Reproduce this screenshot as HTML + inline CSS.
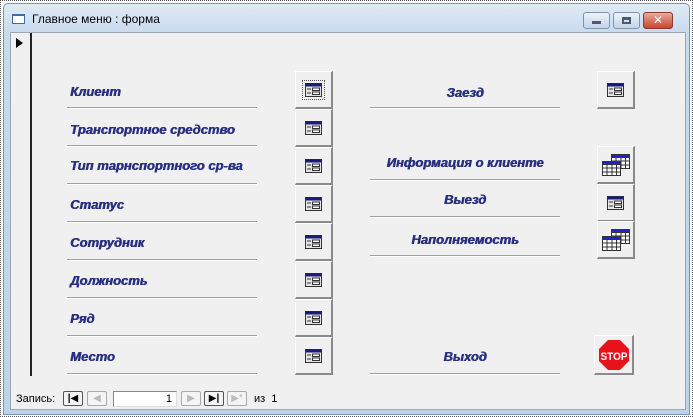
<!DOCTYPE html>
<html><head><meta charset="utf-8"><style>
*{margin:0;padding:0;box-sizing:border-box}
body{width:693px;height:417px;background:#fff;position:relative;overflow:hidden;font-family:"Liberation Sans","DejaVu Sans",sans-serif}
.a{position:absolute}
.win{left:3px;top:3px;width:687px;height:412px;background:linear-gradient(#dfeaf6,#c9daee 30px,#bcd3ec);border:1px solid #7c93b3;border-radius:5px 5px 0 0}
.content{left:10px;top:32px;width:676px;height:378px;background:#f0f0f0;border:1px solid #9aa6b4}
.lbl{position:absolute;color:#28307f;font-weight:bold;font-style:italic;font-size:13px;white-space:nowrap;text-shadow:0.6px 0 0 #28307f}
.ln{position:absolute;height:2px;border-top:1px solid #a0a0a0;border-bottom:1px solid #fff}
.btn{position:absolute;width:38px;height:38px;background:#f0f0f0;border-top:1px solid #fff;border-left:1px solid #fff;border-right:2px solid #8a8a8a;border-bottom:2px solid #8a8a8a;display:flex;align-items:center;justify-content:center}
.nb{position:absolute;top:391px;height:15px;width:20px;border:1px solid #a9a9a9;background:#f4f4f4;border-radius:2px;font-size:10px;text-align:center;line-height:13px;color:#bbb}
</style></head><body>
<svg width="0" height="0" style="position:absolute"><defs>
<symbol id="fi" viewBox="0 0 17 14"><rect x="0.5" y="0.5" width="16" height="13" fill="#e4e4e4" stroke="#333"/><rect x="0.5" y="0.5" width="16" height="3" fill="#1a1a7a"/><path d="M2 6h4M2 10h4" stroke="#333"/><rect x="7.5" y="5" width="7" height="2.5" fill="#fff" stroke="#333" stroke-width="1"/><rect x="7.5" y="9" width="7" height="2.5" fill="#fff" stroke="#333" stroke-width="1"/></symbol>
<symbol id="tb" viewBox="0 0 30 24"><g stroke="#333" stroke-width="1"><rect x="10.5" y="1.5" width="18" height="14" fill="#fff"/><rect x="10.5" y="1.5" width="18" height="3" fill="#2222cc"/><path d="M10.5 8h18M10.5 12h18M15 4v11M20 4v11M24.5 4v11"/><rect x="1.5" y="8.5" width="18" height="14" fill="#fff"/><rect x="1.5" y="8.5" width="18" height="3" fill="#2222cc"/><path d="M1.5 15h18M1.5 19h18M6 11v11M11 11v11M15.5 11v11"/></g></symbol>
</defs></svg>
<div style="position:absolute;left:0;top:0;width:693px;height:417px;border:1px dotted #555"></div>
<div class="a win"></div>
<div class="a" style="left:12px;top:14px;width:13px;height:10px;border:1px solid #3a6ea5;background:#fff;border-top:2px solid #3a6ea5"></div>
<div class="a" style="left:32px;top:12px;font-size:12px;color:#000">Главное меню : форма</div>
<div class="a" style="left:583px;top:12px;width:27px;height:17px;border:1px solid #7f93ad;border-radius:3px;background:linear-gradient(#eef3fa,#c2d3e8)"><div class="a" style="left:8px;top:8px;width:9px;height:3px;background:#4a5a70"></div></div>
<div class="a" style="left:613px;top:12px;width:27px;height:17px;border:1px solid #7f93ad;border-radius:3px;background:linear-gradient(#eef3fa,#c2d3e8)"><div class="a" style="left:8px;top:4px;width:9px;height:7px;border:2px solid #4a5a70;border-top-width:3px"></div></div>
<div class="a" style="left:643px;top:12px;width:30px;height:17px;border:1px solid #8d3a30;border-radius:3px;background:linear-gradient(#e9a99a,#c8452f);color:#fff;font-weight:bold;font-size:12px;text-align:center;line-height:15px">✕</div>
<div class="a content"></div>
<div class="a" style="left:30px;top:33px;width:2px;height:343px;background:#222"></div>
<div class="a" style="left:16px;top:38px;width:0;height:0;border-left:7px solid #000;border-top:5px solid transparent;border-bottom:5px solid transparent"></div>

<div class="lbl" style="left:70px;top:84px">Клиент</div>
<div class="lbl" style="left:70px;top:122px">Транспортное средство</div>
<div class="lbl" style="left:70px;top:158px">Тип тарнспортного ср-ва</div>
<div class="lbl" style="left:70px;top:197px">Статус</div>
<div class="lbl" style="left:70px;top:235px">Сотрудник</div>
<div class="lbl" style="left:70px;top:273px">Должность</div>
<div class="lbl" style="left:70px;top:311px">Ряд</div>
<div class="lbl" style="left:70px;top:349px">Место</div>
<div class="ln" style="left:67px;top:107px;width:190px"></div>
<div class="ln" style="left:67px;top:145px;width:190px"></div>
<div class="ln" style="left:67px;top:183px;width:190px"></div>
<div class="ln" style="left:67px;top:221px;width:190px"></div>
<div class="ln" style="left:67px;top:259px;width:190px"></div>
<div class="ln" style="left:67px;top:297px;width:190px"></div>
<div class="ln" style="left:67px;top:335px;width:190px"></div>
<div class="ln" style="left:67px;top:373px;width:190px"></div>

<div class="btn" style="left:295px;top:71px"><div style="border:1px dotted #555;padding:2px;line-height:0"><svg width="17" height="14"><use href="#fi"/></svg></div></div>
<div class="btn" style="left:295px;top:109px"><svg width="17" height="14"><use href="#fi"/></svg></div>
<div class="btn" style="left:295px;top:147px"><svg width="17" height="14"><use href="#fi"/></svg></div>
<div class="btn" style="left:295px;top:185px"><svg width="17" height="14"><use href="#fi"/></svg></div>
<div class="btn" style="left:295px;top:223px"><svg width="17" height="14"><use href="#fi"/></svg></div>
<div class="btn" style="left:295px;top:261px"><svg width="17" height="14"><use href="#fi"/></svg></div>
<div class="btn" style="left:295px;top:299px"><svg width="17" height="14"><use href="#fi"/></svg></div>
<div class="btn" style="left:295px;top:337px"><svg width="17" height="14"><use href="#fi"/></svg></div>

<div class="lbl" style="left:370px;width:190px;text-align:center;top:85px">Заезд</div>
<div class="lbl" style="left:370px;width:190px;text-align:center;top:155px">Информация о клиенте</div>
<div class="lbl" style="left:370px;width:190px;text-align:center;top:192px">Выезд</div>
<div class="lbl" style="left:370px;width:190px;text-align:center;top:232px">Наполняемость</div>
<div class="lbl" style="left:370px;width:190px;text-align:center;top:349px">Выход</div>
<div class="ln" style="left:370px;top:107px;width:190px"></div>
<div class="ln" style="left:370px;top:179px;width:190px"></div>
<div class="ln" style="left:370px;top:216px;width:190px"></div>
<div class="ln" style="left:370px;top:255px;width:190px"></div>
<div class="ln" style="left:370px;top:373px;width:190px"></div>

<div class="btn" style="left:597px;top:71px"><svg width="17" height="14"><use href="#fi"/></svg></div>
<div class="btn" style="left:597px;top:146px"><svg width="30" height="24"><use href="#tb"/></svg></div>
<div class="btn" style="left:597px;top:184px"><svg width="17" height="14"><use href="#fi"/></svg></div>
<div class="btn" style="left:597px;top:221px"><svg width="30" height="24"><use href="#tb"/></svg></div>
<div class="btn" style="left:594px;top:335px;width:40px;height:40px"><svg width="32" height="32" viewBox="0 0 32 32"><polygon points="10,1 22,1 31,10 31,22 22,31 10,31 1,22 1,10" fill="#e8121a"/><text x="16" y="21" font-family="Liberation Sans" font-weight="bold" font-size="11" fill="#fff" text-anchor="middle" textLength="27" lengthAdjust="spacingAndGlyphs">STOP</text></svg></div>

<div class="a" style="left:16px;top:393px;font-size:11px;color:#000">Запись:</div>
<div class="nb" style="left:63px;color:#000;border-color:#555;font-weight:bold">|◀</div>
<div class="nb" style="left:87px">◀</div>
<div class="a" style="left:113px;top:391px;width:64px;height:16px;border:1px solid #888;border-right-color:#ddd;border-bottom-color:#ddd;background:#fff;font-size:11px;text-align:right;padding-right:4px;line-height:15px">1</div>
<div class="nb" style="left:181px">▶</div>
<div class="nb" style="left:204px;color:#000;border-color:#555;font-weight:bold">▶|</div>
<div class="nb" style="left:227px">▶*</div>
<div class="a" style="left:254px;top:393px;font-size:11px;color:#000">из &nbsp;1</div>
</body></html>
